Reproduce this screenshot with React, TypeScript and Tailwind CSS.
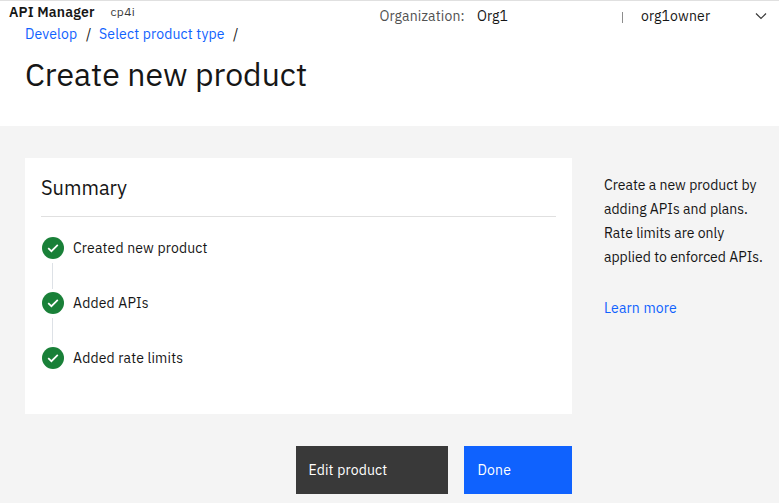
import React from "react";

function CheckBadge() {
  return (
    <svg className="block h-[22px] w-[22px] shrink-0" viewBox="0 0 22 22">
      <circle cx="11" cy="11" r="11" fill="#198038" />
      <path d="M6.2 11.1 L9.4 14.2 L15.8 7.9" fill="none" stroke="#fff" strokeWidth="1.7" />
    </svg>
  );
}

function Step({ children, last }: { children: React.ReactNode; last?: boolean }) {
  return (
    <li className="flex h-[55px] gap-[9px]">
      <div className="flex w-[22px] flex-col items-center">
        <CheckBadge />
        {!last && <div className="mt-1 mr-px h-[26px] w-px bg-[#dde1e6]" />}
      </div>
      <span className="h-[22px] leading-[22px]">{children}</span>
    </li>
  );
}

export default function App() {
  return (
    <div className="h-[503px] w-[779px] overflow-hidden bg-[#f4f4f4] font-['IBM_Plex_Sans',Roboto,sans-serif] text-[14px] whitespace-nowrap text-[#161616]">
      <header className="h-[126px] border-t border-[#e0e0e0] bg-white">
        <div className="flex h-6 pl-[9px]">
          <span className="w-[101.5px] text-[14px] leading-[23px] font-semibold tracking-[0.16px]">API Manager</span>
          <span className="w-[269px] text-[12px] leading-[21px] tracking-[0.32px] text-[#393939]">cp4i</span>
          <span className="w-[97.5px] pt-1 leading-[23px] tracking-[0.16px] text-[#525252]">Organization:</span>
          <span className="w-[144px] pt-1 leading-[23px] tracking-[0.16px]">Org1</span>
          <span className="mt-[11px] ml-px h-[11px] w-px bg-[#8d8d8d]" />
          <span className="ml-[18px] w-[114px] pt-1 leading-[23px] tracking-[0.16px]">org1owner</span>
          <svg className="mt-[11px] h-[8px] w-[12px]" viewBox="0 0 12 8" fill="none" stroke="#393939" strokeWidth="1.2">
            <path d="M1 1.5 L6 6.5 L11 1.5" />
          </svg>
        </div>
        <nav className="flex h-[18px] pl-[25px] leading-[18px] tracking-[0.16px]">
          <a className="w-[61px] text-[#0f62fe]">Develop</a>
          <span className="w-[13px]">/</span>
          <a className="w-[134px] text-[#0f62fe]">Select product type</a>
          <span>/</span>
        </nav>
        <h1 className="mt-[11px] pl-[25px] text-[32px] leading-[40px]">Create new product</h1>
      </header>
      <main className="flex pt-8 pl-[25px]">
        <div className="w-[547px]">
          <section className="h-[256px] bg-white px-4 pt-4">
            <h2 className="h-[43px] border-b border-[#e0e0e0] text-[20px] leading-[28px]">Summary</h2>
            <ul className="mt-5 pl-px tracking-[0.16px]">
              <Step>Created new product</Step>
              <Step>Added APIs</Step>
              <Step last>Added rate limits</Step>
            </ul>
          </section>
          <div className="mt-8 flex justify-end gap-4 tracking-[0.16px] text-white">
            <button className="h-12 w-[152px] bg-[#393939] pl-[12.5px] text-left">Edit product</button>
            <button className="h-12 w-[108px] bg-[#0f62fe] pl-[13.5px] text-left">Done</button>
          </div>
        </div>
        <aside className="ml-8 pt-[15px] leading-[24px]">
          <p>Create a new product by</p>
          <p>adding APIs and plans.</p>
          <p>Rate limits are only</p>
          <p>applied to enforced APIs.</p>
          <a className="mt-[27px] block tracking-[0.16px] text-[#0f62fe]">Learn more</a>
        </aside>
      </main>
    </div>
  );
}
